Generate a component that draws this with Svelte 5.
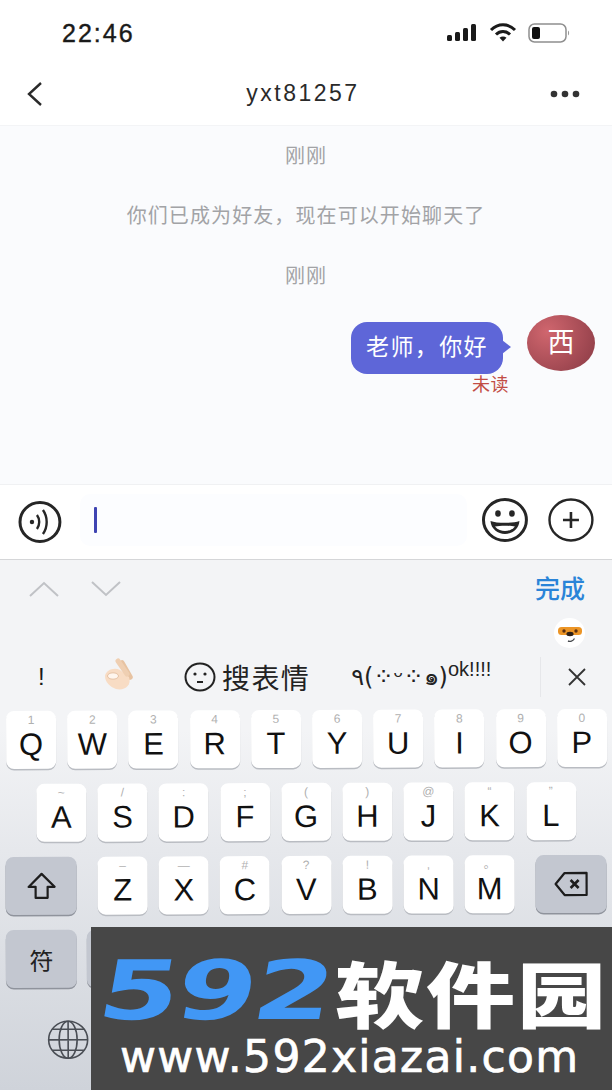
<script>
  const row1 = [['Q','1'],['W','2'],['E','3'],['R','4'],['T','5'],['Y','6'],['U','7'],['I','8'],['O','9'],['P','0']];
  const row2 = [['A','~'],['S','/'],['D',':'],['F',';'],['G','('],['H',')'],['J','@'],['K','“'],['L','”']];
  const row3 = [['Z','–'],['X','—'],['C','#'],['V','?'],['B','!'],['N',','],['M','。']];
</script>

{#snippet key(k)}
  <div class="key">
    <span class="hint">{k[1]}</span>
    <span class="letter">{k[0]}</span>
  </div>
{/snippet}

<div class="page">
  <header class="status">
    <span class="time">22:46</span>
    <div class="status-icons">
      <svg width="32" height="18" viewBox="0 0 32 18" fill="#1a1a1a">
        <rect x="1" y="11" width="5" height="6" rx="1.5"/>
        <rect x="9" y="8" width="5" height="9" rx="1.5"/>
        <rect x="17" y="4" width="5" height="13" rx="1.5"/>
        <rect x="25" y="0" width="5" height="17" rx="1.5"/>
      </svg>
      <svg width="28" height="20" viewBox="0 0 28 20" fill="none" stroke="#1a1a1a" stroke-width="3">
        <path d="M2 7 C9 0 19 0 26 7"/>
        <path d="M7 11.5 C11 7.5 17 7.5 21 11.5"/>
        <path d="M14 18.5 L10.5 14.8 C12.5 13 15.5 13 17.5 14.8 Z" fill="#1a1a1a" stroke="none"/>
      </svg>
      <svg width="42" height="20" viewBox="0 0 42 20" fill="none">
        <rect x="1" y="1" width="37" height="18" rx="5.5" stroke="#8f8f8f" stroke-width="1.5"/>
        <rect x="4" y="4" width="8" height="12" rx="2" fill="#111"/>
        <path d="M40 7.5 C41.5 8.5 41.5 11.5 40 12.5 Z" fill="#9a9a9a"/>
      </svg>
    </div>
  </header>

  <nav class="nav">
    <svg width="18" height="26" viewBox="0 0 18 26" fill="none" stroke="#2a2a2a" stroke-width="2.4">
      <path d="M15 2 L3 13 L15 24"/>
    </svg>
    <span class="title">yxt81257</span>
    <svg class="more" width="30" height="8" viewBox="0 0 30 8" fill="#333">
      <circle cx="4" cy="4" r="3.3"/><circle cx="15" cy="4" r="3.3"/><circle cx="26" cy="4" r="3.3"/>
    </svg>
  </nav>

  <main class="chat">
    <p class="note">刚刚</p>
    <p class="note">你们已成为好友，现在可以开始聊天了</p>
    <p class="note">刚刚</p>
    <div class="msg">
      <div class="msg-body">
        <div class="bubble">老师，你好</div>
        <span class="unread">未读</span>
      </div>
      <div class="avatar">西</div>
    </div>
  </main>

  <section class="composer">
    <svg class="voice" width="44" height="44" viewBox="0 0 44 44" fill="none" stroke="#262626">
      <ellipse cx="22" cy="22" rx="20" ry="19.5" stroke-width="3"/>
      <circle cx="14" cy="22" r="2.2" fill="#262626" stroke="none"/>
      <path d="M19 15 C22 19 22 25 19 29" stroke-width="2.4"/>
      <path d="M25 10 C30 17 30 27 25 34" stroke-width="2.4"/>
    </svg>
    <div class="field"><span class="caret"></span></div>
    <svg width="46" height="44" viewBox="0 0 46 44" fill="none" stroke="#262626">
      <ellipse cx="23" cy="22" rx="21.5" ry="20.5" stroke-width="3"/>
      <ellipse cx="16" cy="15.5" rx="2.8" ry="3.2" fill="#262626" stroke="none"/>
      <ellipse cx="30" cy="15.5" rx="2.8" ry="3.2" fill="#262626" stroke="none"/>
      <path d="M8.5 23 C15 25.5 31 25.5 37.5 23 C37 31 30 36 23 36 C16 36 9 31 8.5 23 Z" fill="#262626" stroke="none"/>
      <path d="M13 28.5 C18 27.5 28 27.5 33 28.5 C30 32 26.5 33 23 33 C19.5 33 16 32 13 28.5 Z" fill="#fff" stroke="none"/>
    </svg>
    <svg class="plus" width="46" height="44" viewBox="0 0 46 44" fill="none" stroke="#262626">
      <ellipse cx="23" cy="22" rx="21.5" ry="20.5" stroke-width="2.4"/>
      <path d="M15 22 H31 M23 14 V30" stroke-width="2.6"/>
    </svg>
  </section>

  <section class="keyboard">
    <div class="toolbar">
      <svg width="32" height="18" viewBox="0 0 32 18" fill="none" stroke="#c0c2c6" stroke-width="2"><path d="M2 16 L16 3 L30 16"/></svg>
      <svg width="32" height="18" viewBox="0 0 32 18" fill="none" stroke="#c0c2c6" stroke-width="2"><path d="M2 2 L16 15 L30 2"/></svg>
      <span class="done">完成</span>
    </div>

    <div class="badge-row">
      <div class="badge">
        <svg width="26" height="22" viewBox="0 0 26 22">
          <rect x="1" y="5" width="24" height="8" rx="3.5" fill="#ec9526"/>
          <circle cx="7" cy="9" r="1.7" fill="#5a2f12"/>
          <circle cx="19" cy="9" r="1.7" fill="#5a2f12"/>
          <ellipse cx="13" cy="12" rx="3.6" ry="2.2" fill="#2d2018"/>
          <path d="M11 19 C13 20 16 19 17.5 16.5" fill="none" stroke="#45484c" stroke-width="1.4"/>
        </svg>
      </div>
    </div>

    <div class="candidates">
      <span class="bang">!</span>
      <svg class="okhand" width="30" height="36" viewBox="0 0 30 36">
        <path d="M19 7 L27 21" stroke="#e7c3a2" stroke-width="5.5" stroke-linecap="round"/>
        <path d="M2 20 C3 14 11 11 17 14 L26 21 C29 30 21 35 13 33 C7 31 2 26 2 20 Z" fill="#f8dcc4"/>
        <path d="M15 5 L24 18" stroke="#efcfb2" stroke-width="5" stroke-linecap="round"/>
        <ellipse cx="10" cy="20" rx="5.5" ry="3.2" fill="#fff6ee" stroke="#e6c3a6" stroke-width="1"/>
      </svg>
      <div class="search">
        <svg width="32" height="30" viewBox="0 0 32 30" fill="none" stroke="#222" stroke-width="2">
          <ellipse cx="16" cy="15" rx="14.5" ry="13.5"/>
          <circle cx="11" cy="12" r="1.6" fill="#222" stroke="none"/>
          <circle cx="21" cy="12" r="1.6" fill="#222" stroke="none"/>
          <path d="M13 20 H19"/>
        </svg>
        <span>搜表情</span>
      </div>
      <span class="kao">٩(⁘ᵕ⁘๑)<sup>ok!!!!</sup></span>
      <span class="cand-sep"></span>
      <svg class="close" width="20" height="20" viewBox="0 0 20 20" stroke="#333" stroke-width="1.8"><path d="M2 2 L18 18 M18 2 L2 18"/></svg>
    </div>

    <div class="rows">
      <div class="row r1">
        {#each row1 as k}{@render key(k)}{/each}
      </div>
      <div class="row r2">
        {#each row2 as k}{@render key(k)}{/each}
      </div>
      <div class="row r3">
        <div class="key fn wide">
          <svg width="30" height="28" viewBox="0 0 30 28" fill="none" stroke="#1d1d1d" stroke-width="2.2" stroke-linejoin="round">
            <path d="M15 2 L28 15 H21 V26 H9 V15 H2 Z"/>
          </svg>
        </div>
        <div class="letters">
          {#each row3 as k}{@render key(k)}{/each}
        </div>
        <div class="key fn wide">
          <svg width="36" height="26" viewBox="0 0 36 26" fill="none" stroke="#1d1d1d" stroke-width="2.2" stroke-linejoin="round">
            <path d="M11 2 H33 V24 H11 L2 13 Z"/>
            <path d="M17 9 L25 17 M25 9 L17 17" stroke-width="2.6"/>
          </svg>
        </div>
      </div>
      <div class="row r4">
        <div class="key fn wide sym">符</div>
        <div class="key fn wide"></div>
      </div>
      <div class="globe-row">
        <svg width="42" height="40" viewBox="0 0 42 40" fill="none" stroke="#4a4e55" stroke-width="1.6">
          <ellipse cx="21" cy="20" rx="19.5" ry="18.5"/>
          <ellipse cx="21" cy="20" rx="9" ry="18.5"/>
          <path d="M21 1.5 V38.5 M1.5 20 H40.5 M5 9.5 H37 M5 30.5 H37"/>
        </svg>
      </div>
    </div>
  </section>

  <aside class="watermark">
    <div class="wm-logo"><span class="wm-num">592</span><span class="wm-cn">软件园</span></div>
    <div class="wm-url">www.592xiazai.com</div>
  </aside>
</div>

<style>
  :global(body) {
    margin: 0;
    background: #fff;
  }
  .page {
    position: relative;
    width: 612px;
    height: 1090px;
    overflow: hidden;
    display: flex;
    flex-direction: column;
    font-family: "Liberation Sans", "Noto Sans CJK SC", sans-serif;
    color: #1a1a1a;
  }
  .status {
    height: 68px;
    flex: none;
    display: flex;
    align-items: center;
    justify-content: space-between;
    padding: 0 42px 2px 62px;
    box-sizing: border-box;
  }
  .time {
    font-size: 25px;
    font-weight: 500;
    letter-spacing: 2px;
    -webkit-text-stroke: 0.4px #1a1a1a;
  }
  .status-icons {
    display: flex;
    align-items: center;
    gap: 11px;
  }
  .nav {
    height: 57px;
    flex: none;
    display: grid;
    grid-template-columns: 1fr auto 1fr;
    align-items: center;
    padding: 0 32px 6px 26px;
    box-sizing: border-box;
  }
  .more {
    justify-self: end;
  }
  .title {
    font-size: 23px;
    letter-spacing: 2.5px;
    color: #2a2a2a;
  }
  .chat {
    height: 360px;
    flex: none;
    background: #fafbfd;
    border-top: 1px solid #f3f4f6;
    border-bottom: 1px solid #f0f1f3;
    box-sizing: border-box;
    display: flex;
    flex-direction: column;
    align-items: center;
  }
  .note {
    margin: 0;
    height: 60px;
    line-height: 60px;
    font-size: 20px;
    letter-spacing: 1.1px;
    color: #a2a3a6;
  }
  .msg {
    align-self: stretch;
    display: flex;
    justify-content: flex-end;
    gap: 24px;
    padding: 9px 17px 0 0;
  }
  .msg-body {
    display: flex;
    flex-direction: column;
    align-items: flex-end;
    margin-top: 7px;
  }
  .bubble {
    position: relative;
    width: 152px;
    height: 52px;
    box-sizing: border-box;
    background: #5e66d8;
    border-radius: 16px;
    color: #fff;
    font-size: 23px;
    letter-spacing: 1.4px;
    line-height: 50px;
    text-align: center;
  }
  .bubble::after {
    content: "";
    position: absolute;
    right: -8px;
    top: 18px;
    border-left: 9px solid #5e66d8;
    border-top: 7px solid transparent;
    border-bottom: 7px solid transparent;
  }
  .unread {
    margin: 1px -6px 0 0;
    font-size: 18px;
    letter-spacing: 0.5px;
    color: #c24d45;
    line-height: 20px;
  }
  .avatar {
    width: 68px;
    height: 56px;
    border-radius: 50%;
    background: radial-gradient(circle at 30% 30%, #d0666e, #93404a 85%);
    color: #fff;
    font-size: 27px;
    text-align: center;
    line-height: 56px;
  }
  .composer {
    height: 75px;
    flex: none;
    display: flex;
    align-items: center;
    background: #fff;
    border-bottom: 1px solid #d5d6d8;
    box-sizing: border-box;
    padding: 0 18px 4px 18px;
  }
  .voice {
    margin-top: 4px;
  }
  .field {
    width: 388px;
    height: 52px;
    margin: 0 15px 0 18px;
    border-radius: 10px;
    background: #fcfdff;
    display: flex;
    align-items: center;
    padding-left: 14px;
    box-sizing: border-box;
  }
  .plus {
    margin-left: 20px;
  }
  .caret {
    width: 3px;
    height: 26px;
    background: #3f44b2;
    border-radius: 1px;
  }
  .keyboard {
    flex: 1;
    display: flex;
    flex-direction: column;
    background: linear-gradient(#f3f4f6 0, #f3f4f6 170px, #e6e8ec 290px, #cfd3da 530px);
  }
  .toolbar {
    height: 58px;
    flex: none;
    display: flex;
    align-items: center;
    gap: 30px;
    padding: 0 27px 0 28px;
  }
  .done {
    margin: -5px 0 0 auto;
    font-size: 25px;
    font-weight: 500;
    color: #2a84d8;
  }
  .badge-row {
    height: 30px;
    flex: none;
    display: flex;
    justify-content: flex-end;
    padding-right: 27px;
  }
  .badge {
    width: 31px;
    height: 30px;
    border-radius: 50%;
    background: #fff;
    display: flex;
    align-items: center;
    justify-content: center;
  }
  .candidates {
    height: 63px;
    flex: none;
    display: flex;
    align-items: center;
    padding-bottom: 6px;
    box-sizing: border-box;
  }
  .bang {
    width: 12px;
    margin-left: 38px;
    font-size: 24px;
  }
  .okhand {
    margin-left: 53px;
    margin-top: -6px;
  }
  .search {
    display: flex;
    align-items: center;
    gap: 6px;
    margin-left: 51px;
    font-size: 28px;
    letter-spacing: 1.4px;
    color: #222;
  }
  .kao {
    margin-left: 41px;
    width: 142px;
    white-space: nowrap;
    font-family: "DejaVu Sans", "Noto Sans", sans-serif;
    font-size: 24px;
    color: #222;
  }
  .kao sup {
    font-family: "Liberation Sans", sans-serif;
    font-size: 20px;
    line-height: 0;
  }
  .cand-sep {
    width: 1px;
    height: 40px;
    margin-left: 47px;
    background: #e6e7ea;
  }
  .close {
    margin-left: 26px;
  }
  .rows {
    display: flex;
    flex-direction: column;
    gap: 15px;
    transform: rotate(-0.2deg);
    transform-origin: 0 0;
  }
  .row {
    display: flex;
    gap: 11.2px;
    height: 58px;
    flex: none;
  }
  .r1 {
    padding-left: 6px;
  }
  .r2 {
    padding-left: 36px;
  }
  .r3,
  .r4 {
    padding-left: 5px;
  }
  .r3 {
    gap: 21px;
  }
  .letters {
    display: flex;
    gap: 11.2px;
  }
  .r4 {
    gap: 10px;
  }
  .key {
    position: relative;
    width: 50px;
    height: 100%;
    flex: none;
    background: #fff;
    border-radius: 8px;
    box-shadow: 0 1.5px 0 #b9bcc2;
    display: flex;
    flex-direction: column;
    align-items: center;
  }
  .key.fn {
    background: #c3c7d0;
    justify-content: center;
    box-shadow: 0 1.5px 0 #8f939c;
  }
  .key.wide {
    width: 71px;
  }
  .sym {
    font-size: 24px;
    color: #222;
  }
  .hint {
    height: 15px;
    margin-top: 2px;
    font-size: 12px;
    line-height: 15px;
    color: #b0b0b0;
  }
  .letter {
    font-size: 31px;
    line-height: 33px;
    color: #111;
  }
  .globe-row {
    margin-top: 17px;
    padding-left: 46px;
  }
  .watermark {
    position: absolute;
    left: 91px;
    right: 0;
    top: 927px;
    bottom: 0;
    background: #474747;
    color: #fff;
    display: flex;
    flex-direction: column;
    padding: 18px 0 0 9px;
  }
  .wm-logo {
    display: flex;
    align-items: center;
    height: 92px;
    white-space: nowrap;
  }
  .wm-num {
    width: 235px;
    flex: none;
    font-family: "DejaVu Sans", sans-serif;
    font-weight: 700;
    font-size: 82px;
    line-height: 1;
    letter-spacing: -2px;
    color: #4197f5;
    transform: skewX(-10deg) scaleX(1.4);
    transform-origin: 0 50%;
  }
  .wm-cn {
    font-family: "Noto Sans CJK SC", sans-serif;
    font-weight: 900;
    font-size: 89px;
    line-height: 1;
    letter-spacing: 2px;
    transform: scaleY(0.8);
  }
  .wm-url {
    font-family: "DejaVu Sans", sans-serif;
    font-size: 44px;
    line-height: 40px;
    letter-spacing: 1.3px;
    padding-left: 20px;
    white-space: nowrap;
    -webkit-text-stroke: 0.7px #fff;
  }
</style>
